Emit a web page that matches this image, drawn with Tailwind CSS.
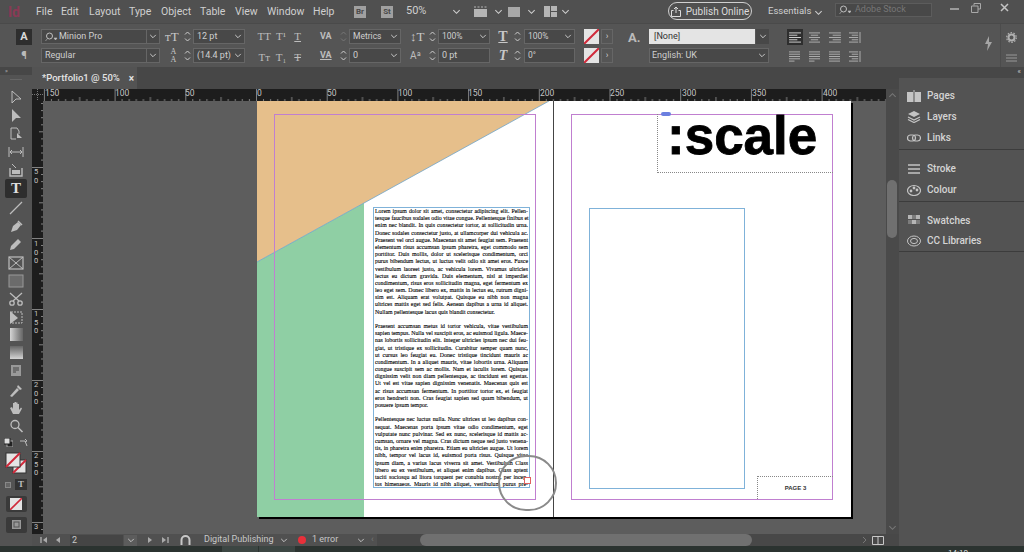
<!DOCTYPE html>
<html lang="en">
<head>
  <meta charset="UTF-8" />
  <title>Adobe InDesign</title>
  <script src="https://cdn.jsdelivr.net/npm/@tailwindcss/browser@4"></script>
</head>
<body class="w-[1024px] h-[552px] overflow-hidden flex flex-col bg-[#535353] text-[#cfcfcf] font-['Roboto',sans-serif]">

  <!-- shared icons -->
  <svg class="hidden">
    <defs>
      <symbol id="chev" viewBox="0 0 10 6"><path d="M1.5 1 L5 4.5 L8.5 1" fill="none" stroke="currentColor" stroke-width="1.2"/></symbol>
      <symbol id="step" viewBox="0 0 11 15"><path d="M3 5.5 L5.5 3 L8 5.5 M3 9.5 L5.5 12 L8 9.5" fill="none" stroke="currentColor" stroke-width="1"/></symbol>
      <symbol id="nofill" viewBox="0 0 15 15"><rect width="15" height="15" fill="#e4e4e4"/><path d="M0 15 L15 0" stroke="#d0293a" stroke-width="2"/></symbol>
      <symbol id="al-left" viewBox="0 0 14 12"><path d="M0 1H13M0 3.5H9M0 6H13M0 8.5H9M0 11H13" stroke="currentColor"/></symbol>
      <symbol id="al-center" viewBox="0 0 14 12"><path d="M1 1H13M3 3.5H11M1 6H13M3 8.5H11M1 11H13" stroke="currentColor"/></symbol>
      <symbol id="al-right" viewBox="0 0 14 12"><path d="M1 1H14M5 3.5H14M1 6H14M5 8.5H14M1 11H14" stroke="currentColor"/></symbol>
      <symbol id="al-spine" viewBox="0 0 14 12"><path d="M1 1H11M4 3.5H11M1 6H11M4 8.5H11M1 11H11" stroke="currentColor"/><path d="M13 0V12" stroke="currentColor"/></symbol>
      <symbol id="al-just" viewBox="0 0 14 12"><path d="M1 1H13M1 3.5H13M1 6H13M1 8.5H13M1 11H7" stroke="currentColor"/></symbol>
      <symbol id="al-full" viewBox="0 0 14 12"><path d="M1 1H13M1 3.5H13M1 6H13M1 8.5H13M1 11H13" stroke="currentColor"/></symbol>
    </defs>
  </svg>

  <!-- menu bar -->
  <header class="h-[23px] shrink-0 flex items-center text-[10.5px] bg-[#505050] relative whitespace-nowrap">
    <span class="ml-[8px] w-[28px] text-[14px] font-bold text-[#8a3a55] leading-none">Id</span>
    <span class="w-[25px]">File</span>
    <span class="w-[28px]">Edit</span>
    <span class="w-[40px]">Layout</span>
    <span class="w-[32px]">Type</span>
    <span class="w-[39px]">Object</span>
    <span class="w-[35px]">Table</span>
    <span class="w-[32px]">View</span>
    <span class="w-[46px]">Window</span>
    <span class="w-[18px]">Help</span>
    <span class="ml-[23px] w-[12px] h-[12px] bg-[#a0a0a0] text-[#4a4a4a] text-[8px] font-bold flex items-center justify-center">Br</span>
    <span class="ml-[15px] w-[12px] h-[12px] bg-[#a0a0a0] text-[#4a4a4a] text-[8px] font-bold flex items-center justify-center">St</span>
    <span class="ml-[13px] w-[33px] text-[11px]">50%</span>
    <svg class="ml-[13px] w-[9px] h-[6px]"><use href="#chev"/></svg>
    <svg class="ml-[12px] w-[15px] h-[13px]" viewBox="0 0 15 13"><rect x="1" y="4" width="13" height="8" fill="#b5b5b5"/><path d="M1 2H14" stroke="#b5b5b5" stroke-dasharray="2 1.5"/></svg>
    <svg class="ml-[6px] w-[9px] h-[6px]"><use href="#chev"/></svg>
    <svg class="ml-[5px] w-[12px] h-[12px]" viewBox="0 0 12 12"><rect y="1" width="12" height="10" fill="#a8a8a8"/></svg>
    <svg class="ml-[7px] w-[9px] h-[6px]"><use href="#chev"/></svg>
    <svg class="ml-[8px] w-[13px] h-[11px]" viewBox="0 0 13 11"><rect width="6" height="11" fill="#b5b5b5"/><rect x="7" width="6" height="5" fill="#b5b5b5"/><rect x="7" y="6" width="6" height="5" fill="#b5b5b5"/></svg>
    <svg class="ml-[4px] w-[9px] h-[6px]"><use href="#chev"/></svg>
    <div class="absolute left-[668px] top-[2px] w-[84px] h-[18px] rounded-full border border-[#d0d0d0] flex items-center justify-center gap-[5px] text-[10px] text-[#dcdcdc]">
      <svg class="w-[10px] h-[11px]" viewBox="0 0 10 11"><path d="M5 7V1M3 3L5 1L7 3M2.5 4.5H.5V10.5H9.5V4.5H7.5" fill="none" stroke="currentColor"/></svg>
      Publish Online
    </div>
    <span class="absolute left-[768px] top-[4px] text-[9.5px]">Essentials</span>
    <svg class="absolute left-[814px] top-[10px] w-[9px] h-[6px]"><use href="#chev"/></svg>
    <div class="absolute left-[835px] top-[3px] w-[97px] h-[14px] bg-[#484848] border border-[#5c5c5c] flex items-center pl-[3px] gap-[4px] text-[9px] text-[#777]">
      <svg class="w-[12px] h-[10px]" viewBox="0 0 12 10"><circle cx="4.5" cy="4" r="3" fill="none" stroke="#c0c0c0"/><path d="M2.5 6.5L.5 9M9 6H12L10.5 8Z" stroke="#c0c0c0" fill="#c0c0c0" stroke-width=".6"/></svg>
      Adobe Stock
    </div>
    <svg class="absolute left-[950px] top-[8px] w-[9px] h-[3px]"><rect width="9" height="2" fill="#9a9a9a"/></svg>
    <svg class="absolute left-[971px] top-[3px] w-[10px] h-[10px]" viewBox="0 0 10 10"><path d="M3 2.5V.5H9.5V6H7M.5 3H7V9.5H.5Z" fill="none" stroke="#a8a8a8"/></svg>
    <svg class="absolute left-[1000px] top-[3px] w-[9px] h-[9px]" viewBox="0 0 9 9"><path d="M1 1L8 8M8 1L1 8" stroke="#c4c4c4" stroke-width="1.5"/></svg>
  </header>

  <!-- control panel -->
  <section class="h-[44px] shrink-0 flex pt-[5px] text-[9px] bg-[#555] border-t border-[#4a4a4a]">
    <div class="ml-[16px] w-[16px] flex flex-col items-center gap-[2px] text-[#d8d8d8]">
      <span class="w-[16px] h-[16px] bg-[#2e2e2e] flex items-center justify-center text-[11px] font-bold">A</span>
      <span class="text-[11px] leading-[18px] font-bold text-[#bbb]">¶</span>
    </div>
    <div class="ml-[9px] w-[119px] flex flex-col gap-[4px]">
      <div class="h-[15px] flex border border-[#666] bg-[#484848] items-center"><svg class="ml-[2px] w-[14px] h-[10px]" viewBox="0 0 12 10"><circle cx="4.5" cy="4" r="3" fill="none" stroke="#c0c0c0"/><path d="M2.5 6.5L.5 9M9 6H12L10.5 8Z" stroke="#c0c0c0" fill="#c0c0c0" stroke-width=".6"/></svg><span class="flex-1 ml-[1px]">Minion Pro</span><span class="w-[13px] h-full border-l border-[#666] flex items-center justify-center"><svg class="w-[8px] h-[5px]"><use href="#chev"/></svg></span></div>
      <div class="h-[15px] flex border border-[#666] bg-[#484848] items-center"><span class="flex-1 ml-[3px]">Regular</span><span class="w-[13px] h-full border-l border-[#666] flex items-center justify-center"><svg class="w-[8px] h-[5px]"><use href="#chev"/></svg></span></div>
    </div>
    <div class="ml-[5px] w-[80px] flex flex-col gap-[4px]">
      <div class="h-[15px] flex items-center"><span class="w-[17px] font-['Liberation_Serif',serif] text-[13px] leading-none text-[#c8c8c8]">ᴛT</span><svg class="w-[11px] h-[15px]"><use href="#step"/></svg><span class="flex-1 h-full flex items-center border border-[#666] bg-[#484848] pl-[3px]">12 pt<svg class="ml-auto mr-[2px] w-[8px] h-[5px]"><use href="#chev"/></svg></span></div>
      <div class="h-[15px] flex items-center"><span class="w-[17px] font-['Liberation_Serif',serif] text-[8px] leading-[8px] text-center text-[#c8c8c8]">A<br>A</span><svg class="w-[11px] h-[15px]"><use href="#step"/></svg><span class="flex-1 h-full flex items-center border border-[#666] bg-[#484848] pl-[3px] whitespace-nowrap">(14.4 pt)<svg class="ml-auto mr-[2px] w-[8px] h-[5px]"><use href="#chev"/></svg></span></div>
    </div>
    <div class="ml-[11px] w-[50px] grid grid-cols-3 gap-y-[4px] font-['Liberation_Serif',serif] text-[11px] text-[#bdbdbd] text-center leading-[15px]">
      <span>TT</span><span>T¹</span><span class="underline">T</span>
      <span>Tт</span><span>T₁</span><span class="line-through">T</span>
    </div>
    <div class="ml-[14px] w-[81px] flex flex-col gap-[4px]">
      <div class="h-[15px] flex items-center"><span class="w-[18px] text-[9px] font-bold text-[#bdbdbd]">VA</span><svg class="w-[11px] h-[15px] text-[#777]"><use href="#step"/></svg><span class="flex-1 h-full flex items-center border border-[#666] bg-[#484848] pl-[3px] text-[8.5px]">Metrics<svg class="ml-auto mr-[2px] w-[8px] h-[5px]"><use href="#chev"/></svg></span></div>
      <div class="h-[15px] flex items-center"><span class="w-[18px] text-[9px] font-bold text-[#bdbdbd] underline">VA</span><svg class="w-[11px] h-[15px]"><use href="#step"/></svg><span class="flex-1 h-full flex items-center border border-[#666] bg-[#484848] pl-[3px]">0<svg class="ml-auto mr-[2px] w-[8px] h-[5px]"><use href="#chev"/></svg></span></div>
    </div>
    <div class="ml-[9px] w-[80px] flex flex-col gap-[4px]">
      <div class="h-[15px] flex items-center"><span class="w-[17px] font-['Liberation_Serif',serif] text-[13px] leading-none text-[#c8c8c8]">↕T</span><svg class="w-[11px] h-[15px]"><use href="#step"/></svg><span class="flex-1 h-full flex items-center border border-[#666] bg-[#484848] pl-[3px] text-[8.5px]">100%<svg class="ml-auto mr-[2px] w-[8px] h-[5px]"><use href="#chev"/></svg></span></div>
      <div class="h-[15px] flex items-center"><span class="w-[17px] text-[10px] leading-none text-[#bdbdbd]">Aª</span><svg class="w-[11px] h-[15px]"><use href="#step"/></svg><span class="flex-1 h-full flex items-center border border-[#666] bg-[#484848] pl-[3px]">0 pt</span></div>
    </div>
    <div class="ml-[5px] w-[16px] flex flex-col gap-[4px] font-['Liberation_Serif',serif] text-[14px] font-bold leading-[15px] text-center text-[#c8c8c8]">
      <span class="underline">T</span>
      <span class="italic">T</span>
    </div>
    <div class="w-[64px] flex flex-col gap-[4px]">
      <div class="h-[15px] flex items-center"><svg class="w-[13px] h-[15px]"><use href="#step"/></svg><span class="flex-1 h-full flex items-center border border-[#666] bg-[#484848] pl-[3px] text-[8.5px]">100%<svg class="ml-auto mr-[2px] w-[8px] h-[5px]"><use href="#chev"/></svg></span></div>
      <div class="h-[15px] flex items-center"><svg class="w-[13px] h-[15px]"><use href="#step"/></svg><span class="flex-1 h-full flex items-center border border-[#666] bg-[#484848] pl-[3px] text-[8.5px]">0°</span></div>
    </div>
    <div class="ml-[9px] w-[30px] flex flex-col gap-[4px]">
      <div class="h-[15px] flex items-center gap-[2px]"><svg class="w-[15px] h-[15px]"><use href="#nofill"/></svg><span class="w-[12px] h-[15px] border border-[#666] text-center leading-[12px]">›</span></div>
      <div class="h-[15px] flex items-center gap-[2px]"><svg class="w-[15px] h-[15px]"><use href="#nofill"/></svg><span class="w-[12px] h-[15px] border border-[#666] text-center leading-[12px]">›</span></div>
    </div>
    <span class="ml-[14px] w-[12px] text-[13px] font-bold leading-[18px] text-[#bbb]">A.</span>
    <div class="ml-[9px] w-[120px] flex flex-col gap-[4px]">
      <div class="h-[15px] flex"><span class="w-[106px] bg-[#e4e4e4] text-[#333] pl-[5px] leading-[15px]">[None]</span><span class="flex-1 ml-[1px] bg-[#484848] flex items-center justify-center"><svg class="w-[8px] h-[5px]"><use href="#chev"/></svg></span></div>
      <div class="h-[15px] flex items-center border border-[#666] bg-[#484848] pl-[2px]">English: UK<svg class="ml-auto mr-[2px] w-[8px] h-[5px]"><use href="#chev"/></svg></div>
    </div>
    <div class="ml-[18px] w-[80px] grid grid-cols-4 gap-y-[4px] text-[#b5b5b5] h-[34px]">
      <span class="w-[16px] h-[16px] bg-[#2e2e2e] flex items-center justify-center"><svg class="w-[13px] h-[11px] text-[#ddd]"><use href="#al-left"/></svg></span>
      <span class="flex items-center justify-start pl-[1px]"><svg class="w-[13px] h-[11px]"><use href="#al-center"/></svg></span>
      <span class="flex items-center justify-start pl-[1px]"><svg class="w-[13px] h-[11px]"><use href="#al-right"/></svg></span>
      <span class="flex items-center justify-start pl-[1px]"><svg class="w-[13px] h-[11px]"><use href="#al-spine"/></svg></span>
      <span class="flex items-center justify-start pl-[1px]"><svg class="w-[13px] h-[11px]"><use href="#al-just"/></svg></span>
      <span class="flex items-center justify-start pl-[1px]"><svg class="w-[13px] h-[11px]"><use href="#al-just"/></svg></span>
      <span class="flex items-center justify-start pl-[1px]"><svg class="w-[13px] h-[11px]"><use href="#al-full"/></svg></span>
      <span class="flex items-center justify-start pl-[1px]"><svg class="w-[13px] h-[11px]"><use href="#al-spine"/></svg></span>
    </div>
    <svg class="ml-[117px] mt-[7px] w-[9px] h-[15px]" viewBox="0 0 9 15"><path d="M5 0L1 8H4L3 15L8 6H5Z" fill="#a5a5a5"/></svg>
    <div class="ml-[7px] w-[21px] -mt-[5px] h-[44px] border-l border-[#4c4c4c] flex flex-col items-center pt-[8px] gap-[11px]">
      <svg class="w-[11px] h-[11px]" viewBox="0 0 11 11"><circle cx="5.5" cy="5.5" r="3" fill="none" stroke="#b0b0b0" stroke-width="2"/><circle cx="5.5" cy="5.5" r="4.8" fill="none" stroke="#b0b0b0" stroke-width="1.2" stroke-dasharray="1.6 1.4"/></svg>
      <svg class="w-[11px] h-[8px]" viewBox="0 0 11 8"><path d="M0 1H11M0 4H11M0 7H11" stroke="#999"/></svg>
    </div>
  </section>

  <!-- workspace -->
  <div class="flex-1 min-h-0 flex">
    <!-- tools -->
    <aside class="w-[32px] shrink-0 flex flex-col bg-[#535353]">
      <div class="h-[8px] bg-[#474747] text-[6px] leading-[8px] pl-[5px] text-[#bbb]">»</div>
      <div class="mx-auto mt-[4px] w-[12px] h-[1px] bg-[#666]"></div>
      <div class="mt-[8px] flex flex-col items-center gap-[0.3px] text-[#bdbdbd]">
        <svg class="w-[18px] h-[18px]" viewBox="0 0 18 18"><path d="M5 3L14 11H9L5 15Z" fill="none" stroke="currentColor"/></svg>
        <svg class="w-[18px] h-[18px]" viewBox="0 0 18 18"><path d="M5 3L14 12H9L5 16Z" fill="currentColor"/></svg>
        <svg class="w-[18px] h-[18px]" viewBox="0 0 18 18"><path d="M4 3H10L12 6V9M4 3V14H9" fill="none" stroke="currentColor"/><path d="M10 8L15 13H10Z" fill="currentColor"/></svg>
        <svg class="w-[18px] h-[18px]" viewBox="0 0 18 18"><path d="M2 4V14M16 4V14M3 9H15M3 9L5 7M3 9L5 11M15 9L13 7M15 9L13 11" fill="none" stroke="currentColor"/></svg>
        <svg class="w-[18px] h-[18px]" viewBox="0 0 18 18"><path d="M3 7V15H15V7" fill="none" stroke="currentColor" stroke-width="1.4"/><rect x="5" y="9" width="8" height="4" fill="currentColor"/><path d="M5 3L9 7" stroke="currentColor"/></svg>
        <span class="w-[22px] h-[19px] rounded-[2px] bg-[#2e2e2e] text-[#e0e0e0] text-center font-['Liberation_Serif',serif] font-bold text-[15px] leading-[19px]">T</span>
        <svg class="w-[18px] h-[18px]" viewBox="0 0 18 18"><path d="M3 15L15 3" stroke="currentColor" stroke-width="1.2"/></svg>
        <svg class="w-[18px] h-[18px]" viewBox="0 0 18 18"><path d="M4 15L6 9L11 5L14 8L10 13Z" fill="currentColor"/><path d="M11 4L15 8" stroke="currentColor" stroke-width="1.5"/></svg>
        <svg class="w-[18px] h-[18px]" viewBox="0 0 18 18"><path d="M3 15L4 11L11 4L14 7L7 14Z" fill="currentColor"/></svg>
        <svg class="w-[18px] h-[18px]" viewBox="0 0 18 18"><rect x="2" y="3" width="14" height="12" fill="none" stroke="currentColor" stroke-width="1.2"/><path d="M2 3L16 15M16 3L2 15" stroke="currentColor"/></svg>
        <svg class="w-[18px] h-[18px]" viewBox="0 0 18 18"><rect x="2" y="3" width="14" height="12" fill="#6b6b6b" stroke="#999"/></svg>
        <svg class="w-[18px] h-[18px]" viewBox="0 0 18 18"><path d="M3 3L12 11M15 3L6 11" stroke="currentColor" stroke-width="1.3"/><circle cx="5" cy="13" r="2.2" fill="none" stroke="currentColor" stroke-width="1.3"/><circle cx="13" cy="13" r="2.2" fill="none" stroke="currentColor" stroke-width="1.3"/></svg>
        <svg class="w-[18px] h-[18px]" viewBox="0 0 18 18"><rect x="4" y="3" width="11" height="11" fill="none" stroke="currentColor" stroke-dasharray="2 1"/><path d="M3 2L11 9L3 15Z" fill="currentColor"/></svg>
        <span class="my-[1px] w-[13px] h-[13px] bg-gradient-to-r from-[#d5d5d5] to-[#666]"></span>
        <span class="mt-[4px] mb-[2px] w-[13px] h-[13px] bg-gradient-to-b from-[#666] to-[#d5d5d5]"></span>
        <svg class="mt-[1px] w-[18px] h-[18px]" viewBox="0 0 18 18"><rect x="4" y="3" width="10" height="11" fill="#999"/><path d="M6 6H12M6 8H12M6 10H9" stroke="#444"/></svg>
        <svg class="w-[18px] h-[18px]" viewBox="0 0 18 18"><path d="M3 15L10 7L12 9L5 16ZM11 4L15 8L13 9L10 6Z" fill="currentColor"/></svg>
        <svg class="w-[18px] h-[18px]" viewBox="0 0 18 18"><path d="M6 15L3 9L5 8L6 10V4H7.5V8V3H9V8V3.5H10.5V8V5H12V11L14 8.5L15 9.5L12 15Z" fill="currentColor"/></svg>
        <svg class="w-[18px] h-[18px]" viewBox="0 0 18 18"><circle cx="8" cy="7.5" r="4" fill="none" stroke="currentColor" stroke-width="1.3"/><path d="M11 10.5L15.5 15" stroke="currentColor" stroke-width="1.6"/></svg>
        <div class="h-[14px] w-[26px] flex items-center justify-between px-[1px]">
          <svg class="w-[9px] h-[9px]" viewBox="0 0 9 9"><rect x="3" y="3" width="6" height="6" fill="#222" stroke="#aaa"/><rect width="6" height="6" fill="#ddd" stroke="#222"/></svg>
          <svg class="w-[9px] h-[9px]" viewBox="0 0 9 9"><path d="M1 3H6L8 8M6 1L8 3L6 4" fill="none" stroke="#bbb"/></svg>
        </div>
        <svg class="mt-[2px] w-[22px] h-[22px]" viewBox="0 0 22 22"><rect x="8" y="8" width="13" height="13" fill="#e4e4e4" stroke="#333"/><path d="M8 21L21 8" stroke="#d0293a" stroke-width="2"/><rect x="1" y="1" width="14" height="14" fill="#e4e4e4" stroke="#333"/><path d="M1 15L15 1" stroke="#d0293a" stroke-width="2"/></svg>
        <div class="mt-[5px] flex gap-[4px] items-center">
          <span class="w-[6px] h-[6px] border border-[#888] bg-[#666]"></span>
          <span class="w-[12px] h-[11px] bg-[#333] text-center text-[9px] leading-[11px] font-bold font-['Liberation_Serif',serif]">T</span>
        </div>
        <span class="mt-[5px] w-[21px] h-[16px] bg-[#3a3a3a] rounded-[2px] flex items-center justify-center"><svg class="w-[12px] h-[12px]"><use href="#nofill"/></svg></span>
        <span class="mt-[5px] w-[21px] h-[16px] bg-[#3a3a3a] rounded-[2px] flex items-center justify-center"><svg class="w-[9px] h-[9px]" viewBox="0 0 9 9"><rect width="9" height="9" fill="#999"/><rect x="2" y="2" width="5" height="5" fill="none" stroke="#555"/></svg></span>
      </div>
    </aside>

    <!-- document -->
    <main class="flex-1 min-w-0 flex flex-col">
      <div class="h-[22px] shrink-0 bg-[#474747] flex">
        <div class="w-[105px] bg-[#535353] flex items-center text-[9.5px] font-medium text-[#e4e4e4] pl-[10px] whitespace-nowrap">
          *Portfolio1 @ 50%<span class="ml-[9px] font-bold text-[10px]">×</span>
        </div>
      </div>

      <div class="flex-1 min-h-0 flex">
        <div class="flex-1 min-w-0 flex flex-col">
          <!-- horizontal ruler -->
          <div class="relative h-[12px] shrink-0 bg-[#1d1d1d] text-[8.5px] leading-[9px] text-[#c4c4c4] overflow-hidden">
            <svg class="absolute inset-0 w-full h-full">
              <defs>
                <pattern id="hticks" x="224" width="70.7" height="12" patternUnits="userSpaceOnUse">
                  <path d="M.5 0V12M7.5 10V12M14.6 10V12M21.7 10V12M28.8 10V12M35.8 8V12M42.9 10V12M50 10V12M57 10V12M64.1 10V12" stroke="#9a9a9a" stroke-width=".8"/>
                </pattern>
              </defs>
              <rect x="11" width="844" height="12" fill="url(#hticks)"/>
              <path d="M0 5.5H11M5.5 0V11" stroke="#777" stroke-dasharray="1 1"/>
            </svg>
            <span class="absolute left-[13px] top-0">150</span>
            <span class="absolute left-[83px] top-0">100</span>
            <span class="absolute left-[153px] top-0">50</span>
            <span class="absolute left-[225px] top-0">0</span>
            <span class="absolute left-[295px] top-0">50</span>
            <span class="absolute left-[366px] top-0">100</span>
            <span class="absolute left-[436px] top-0">150</span>
            <span class="absolute left-[508px] top-0">200</span>
            <span class="absolute left-[578px] top-0">250</span>
            <span class="absolute left-[650px] top-0">300</span>
            <span class="absolute left-[720px] top-0">350</span>
            <span class="absolute left-[791px] top-0">400</span>
          </div>

          <div class="flex-1 min-h-0 flex">
            <!-- vertical ruler -->
            <div class="relative w-[11px] shrink-0 bg-[#1d1d1d] text-[7.5px] leading-[8.5px] text-[#c4c4c4] overflow-hidden">
              <svg class="absolute inset-0 w-full h-full">
                <defs>
                  <pattern id="vticks" y="-5" width="11" height="71" patternUnits="userSpaceOnUse">
                    <path d="M0 .5H11M9 7.5H11M9 14.6H11M9 21.7H11M9 28.8H11M7 35.8H11M9 42.9H11M9 50H11M9 57H11M9 64.1H11" stroke="#9a9a9a" stroke-width=".8"/>
                  </pattern>
                </defs>
                <rect width="11" height="433" fill="url(#vticks)"/>
              </svg>
              <span class="absolute left-0 top-[67px] w-[8px] text-center">5<br>0</span>
              <span class="absolute left-0 top-[139px] w-[8px] text-center">1<br>0<br>0</span>
              <span class="absolute left-0 top-[209px] w-[8px] text-center">1<br>5<br>0</span>
              <span class="absolute left-0 top-[280px] w-[8px] text-center">2<br>0<br>0</span>
              <span class="absolute left-0 top-[351px] w-[8px] text-center">2<br>5<br>0</span>
              <span class="absolute left-0 top-[422px] w-[8px] text-center">3</span>
            </div>

            <!-- pasteboard -->
            <div class="relative flex-1 min-w-0 bg-[#5d5d5d] overflow-hidden">
              <div class="absolute left-[214px] top-0 w-[594px] h-[416px] bg-white shadow-[2px_2px_0_#000]">
                <svg class="absolute inset-0 w-full h-full" viewBox="0 0 594 416">
                  <polygon points="0,0 292,0 0,161" fill="#e6bf8b"/>
                  <polygon points="0,161 107,102 107,416 0,416" fill="#8fcfa4"/>
                  <line x1="292" y1="0" x2="0" y2="161" stroke="#6fa3c9" stroke-width=".8"/>
                  <rect x="17.5" y="13.5" width="261" height="385" fill="none" stroke="#c07fd0"/>
                  <rect x="314.5" y="13.5" width="261" height="385" fill="none" stroke="#c07fd0"/>
                  <line x1="296.5" y1="0" x2="296.5" y2="416" stroke="#444"/>
                  <rect x="332.5" y="107.5" width="155" height="280" fill="none" stroke="#7fb2d9"/>
                </svg>

                <!-- body text frame -->
                <div class="absolute left-[116px] top-[106px] w-[157px] h-[281px] border border-[#7fb2d9] pl-[1px] pr-[1px] font-['Liberation_Serif',serif] text-[5.85px] leading-[7.18px] text-black whitespace-nowrap [-webkit-text-stroke:0.1px_black] [text-align:justify] [text-align-last:justify]">
                  <div>Lorem ipsum dolor sit amet, consectetur adipiscing elit. Pellen-</div>
                  <div>tesque faucibus sodales odio vitae congue. Pellentesque finibus et</div>
                  <div>enim nec blandit. In quis consectetur tortor, at sollicitudin urna.</div>
                  <div>Donec sodales consectetur justo, at ullamcorper dui vehicula ac.</div>
                  <div>Praesent vel orci augue. Maecenas sit amet feugiat sem. Praesent</div>
                  <div>elementum risus accumsan ipsum pharetra, eget commodo sem</div>
                  <div>porttitor. Duis mollis, dolor ut scelerisque condimentum, orci</div>
                  <div>purus bibendum lectus, ut luctus velit odio sit amet eros. Fusce</div>
                  <div>vestibulum laoreet justo, ac vehicula lorem. Vivamus ultricies</div>
                  <div>lectus eu dictum gravida. Duis elementum, nisl at imperdiet</div>
                  <div>condimentum, risus eros sollicitudin magna, eget fermentum ex</div>
                  <div>leo eget sem. Donec libero ex, mattis in lectus eu, rutrum digni-</div>
                  <div>sim est. Aliquam erat volutpat. Quisque eu nibh non magna</div>
                  <div>ultrices mattis eget sed felis. Aenean dapibus a urna id aliquet.</div>
                  <div class="[text-align-last:left] mb-[7.18px]">Nullam pellentesque lacus quis blandit consectetur.</div>
                  <div>Praesent accumsan metus id tortor vehicula, vitae vestibulum</div>
                  <div>sapien tempus. Nulla vel suscipit eros, ac euismod ligula. Maece-</div>
                  <div>nas lobortis sollicitudin elit. Integer ultricies ipsum nec dui feu-</div>
                  <div>giat, ut tristique ex sollicitudin. Curabitur semper quam nunc,</div>
                  <div>ut cursus leo feugiat eu. Donec tristique tincidunt mauris ac</div>
                  <div>condimentum. In a aliquet mauris, vitae lobortis urna. Aliquam</div>
                  <div>congue suscipit sem ac mollis. Nam et iaculis lorem. Quisque</div>
                  <div>dignissim velit non diam pellentesque, ac tincidunt est egestas.</div>
                  <div>Ut vel est vitae sapien dignissim venenatis. Maecenas quis est</div>
                  <div>ac risus accumsan fermentum. In porttitor tortor ex, et feugiat</div>
                  <div>eros hendrerit non. Cras feugiat sapien sed quam bibendum, ut</div>
                  <div class="[text-align-last:left] mb-[7.18px]">posuere ipsum tempor.</div>
                  <div>Pellentesque nec luctus nulla. Nunc ultrices ut leo dapibus con-</div>
                  <div>sequat. Maecenas porta ipsum vitae odio condimentum, eget</div>
                  <div>vulputate nunc pulvinar. Sed ex nunc, scelerisque id mattis ac-</div>
                  <div>cumsan, ornare vel magna. Cras dictum neque sed justo venena-</div>
                  <div>tis, in pharetra enim pharetra. Etiam eu ultricies augue. Ut lorem</div>
                  <div>nibh, tempor vel lacus id, euismod porta risus. Quisque vitae</div>
                  <div>ipsum diam, a varius lacus viverra sit amet. Vestibulum Class</div>
                  <div>libero eu ex vestibulum, et aliquet enim dapibus. Class aptent</div>
                  <div>taciti sociosqu ad litora torquent per conubia nostra, per incep-</div>
                  <div>tos himenaeos. Mauris id nibh aliquet, vestibulum purus pre-</div>
                </div>
                <span class="absolute left-[267px] top-[376px] w-[7px] h-[7px] bg-white border border-[#e0605f]"></span>

                <!-- heading frame -->
                <div class="absolute left-[400px] top-[13px] w-[176px] h-[59px] border-l border-b border-dotted border-[#888]">
                  <span class="absolute left-[9px] top-[-8px] font-['Liberation_Sans',sans-serif] font-bold text-[53px] leading-[60px] text-black [-webkit-text-stroke:0.8px_black]">:scale</span>
                </div>
                <span class="absolute left-[404px] top-[11px] w-[10px] h-[4px] rounded-full bg-[#6b7fe0]"></span>

                <!-- folio frame -->
                <div class="absolute left-[500px] top-[375px] w-[76px] h-[23px] border-l border-t border-dotted border-[#888] flex items-center justify-center font-['Liberation_Sans',sans-serif] font-bold text-[6px] text-[#333]">PAGE 3</div>

                <!-- highlight circle -->
                <span class="absolute left-[241px] top-[354px] w-[59px] h-[56px] rounded-full border-2 border-[#8a8a8a]"></span>
              </div>
            </div>
          </div>
        </div>

        <!-- vertical scrollbar -->
        <div class="relative w-[13px] shrink-0 bg-[#4a4a4a]">
          <svg class="absolute left-[2px] top-[3px] w-[9px] h-[6px] rotate-180 text-[#777]"><use href="#chev"/></svg>
          <span class="absolute left-[1px] top-[91px] w-[10px] h-[58px] rounded-full bg-[#707070]"></span>
          <svg class="absolute left-[2px] bottom-[3px] w-[9px] h-[6px] text-[#777]"><use href="#chev"/></svg>
        </div>
      </div>

      <!-- status bar -->
      <div class="h-[12px] shrink-0 flex items-center bg-[#505050] text-[9px] text-[#c8c8c8] whitespace-nowrap">
        <svg class="ml-[8px] w-[8px] h-[8px]" viewBox="0 0 8 8"><path d="M1 1V7" stroke="#aaa" stroke-width="1.4"/><path d="M7 1V7L3 4Z" fill="#aaa"/></svg>
        <svg class="ml-[6px] w-[8px] h-[8px]" viewBox="0 0 8 8"><path d="M6 1V7L2 4Z" fill="#aaa"/></svg>
        <span class="ml-[8px] w-[53px] h-[11px] bg-[#454545] pl-[2px] leading-[11px]">2</span>
        <span class="ml-[1px] w-[13px] h-[11px] bg-[#5c5c5c] flex items-center justify-center"><svg class="w-[8px] h-[5px]"><use href="#chev"/></svg></span>
        <svg class="ml-[9px] w-[8px] h-[8px]" viewBox="0 0 8 8"><path d="M2 1V7L6 4Z" fill="#aaa"/></svg>
        <svg class="ml-[6px] w-[10px] h-[8px]" viewBox="0 0 10 8"><path d="M2 1V7L6 4Z" fill="#aaa"/><path d="M8 1V7" stroke="#aaa" stroke-width="1.4"/></svg>
        <svg class="ml-[10px] w-[13px] h-[11px]" viewBox="0 0 13 11"><path d="M1.5 10V5A4 4 0 0 1 9.5 5V10" fill="none" stroke="#c8c8c8" stroke-width="2"/></svg>
        <span class="ml-[11px] w-[76px]">Digital Publishing</span>
        <svg class="w-[8px] h-[5px]"><use href="#chev"/></svg>
        <span class="ml-[10px] w-[8px] h-[8px] rounded-full bg-[#e8303a]"></span>
        <span class="ml-[6px] w-[45px]">1 error</span>
        <svg class="w-[8px] h-[5px]"><use href="#chev"/></svg>
        <span class="ml-[6px] w-[6px] text-[#777]">‹</span>
        <div class="flex-1 h-full bg-[#484848] flex items-center">
          <span class="ml-[43px] w-[332px] h-[12px] bg-[#707070] rounded-full"></span>
          <svg class="ml-auto mr-[5px] w-[5px] h-[8px]" viewBox="0 0 5 8"><path d="M1 1L4 4L1 7" fill="none" stroke="#777"/></svg>
          <svg class="mr-[15px] w-[12px] h-[9px]" viewBox="0 0 12 9"><path d="M.5.5H11.5V8.5H.5ZM6 .5V8.5" fill="none" stroke="#c8c8c8"/></svg>
        </div>
      </div>
    </main>

    <!-- right panels -->
    <aside class="w-[125px] shrink-0 flex flex-col bg-[#474747] text-[10px] font-medium text-[#d4d4d4]">
      <div class="h-[11px] text-[7px] leading-[10px] text-right pr-[3px] text-[#bbb]">«</div>
      <div class="flex-1 bg-[#535353] flex flex-col">
        <div class="h-[72px] border-b border-[#3c3c3c] pt-[7px] flex flex-col">
          <div class="h-[21px] flex items-center pl-[8px] gap-[6px]"><svg class="w-[14px] h-[12px]" viewBox="0 0 14 12"><path d="M0 2H6V12H0ZM8 2H14V12H8Z" fill="#c4c4c4"/><path d="M7 0V12" stroke="#c4c4c4"/></svg>Pages</div>
          <div class="h-[21px] flex items-center pl-[8px] gap-[6px]"><svg class="w-[14px] h-[12px]" viewBox="0 0 14 12"><path d="M7 0L13 3L7 6L1 3Z" fill="#c4c4c4"/><path d="M1 6L7 9L13 6M1 8.5L7 11.5L13 8.5" fill="none" stroke="#c4c4c4" stroke-width="1.3"/></svg>Layers</div>
          <div class="h-[21px] flex items-center pl-[8px] gap-[6px]"><svg class="w-[14px] h-[12px]" viewBox="0 0 14 12"><rect x=".5" y="3" width="8" height="6" rx="3" fill="none" stroke="#c4c4c4" stroke-width="1.2"/><rect x="5.5" y="3" width="8" height="6" rx="3" fill="none" stroke="#c4c4c4" stroke-width="1.2"/></svg>Links</div>
        </div>
        <div class="h-[52px] border-b border-[#3c3c3c] pt-[8px] flex flex-col">
          <div class="h-[21px] flex items-center pl-[8px] gap-[6px]"><svg class="w-[14px] h-[12px]" viewBox="0 0 14 12"><path d="M1 2H13M1 6H13M1 10H13" stroke="#c4c4c4" stroke-width="1.4"/></svg>Stroke</div>
          <div class="h-[21px] flex items-center pl-[8px] gap-[6px]"><svg class="w-[14px] h-[12px]" viewBox="0 0 14 12"><ellipse cx="7" cy="6.5" rx="6.5" ry="5" fill="none" stroke="#c4c4c4" stroke-width="1.2"/><circle cx="4" cy="7" r="1.4" fill="#c4c4c4"/><circle cx="7" cy="4" r="1.4" fill="#c4c4c4"/><circle cx="10" cy="6" r="1.4" fill="#c4c4c4"/></svg>Colour</div>
        </div>
        <div class="h-[50px] border-b border-[#3c3c3c] pt-[8px] flex flex-col">
          <div class="h-[21px] flex items-center pl-[8px] gap-[6px]"><svg class="w-[14px] h-[12px]" viewBox="0 0 14 12"><path d="M1 1H5V5H1ZM9 1H13V5H9ZM5 6H9V10H5Z" fill="#b5b5b5"/><path d="M5 1H9V5H5ZM1 6H5V10H1ZM9 6H13V10H9Z" fill="#7c7c7c"/></svg>Swatches</div>
          <div class="h-[21px] flex items-center pl-[8px] gap-[6px]"><svg class="w-[14px] h-[12px]" viewBox="0 0 14 12"><ellipse cx="7" cy="6" rx="6.5" ry="5" fill="none" stroke="#c4c4c4"/><ellipse cx="7" cy="6" rx="3.5" ry="2.6" fill="none" stroke="#c4c4c4"/></svg>CC Libraries</div>
        </div>
      </div>
    </aside>
  </div>

  <!-- taskbar strip -->
  <footer class="relative h-[6px] shrink-0 bg-[#2b3330] overflow-hidden">
    <span class="absolute left-[222px] top-0 w-[36px] h-full bg-[#3c4643]"></span>
    <span class="absolute left-[259px] top-0 w-[36px] h-full bg-[#3c4643]"></span>
    <span class="absolute left-[948px] top-[3px] text-[8px] leading-[8px] text-[#ddd]">14:10</span>
  </footer>
</body>
</html>
